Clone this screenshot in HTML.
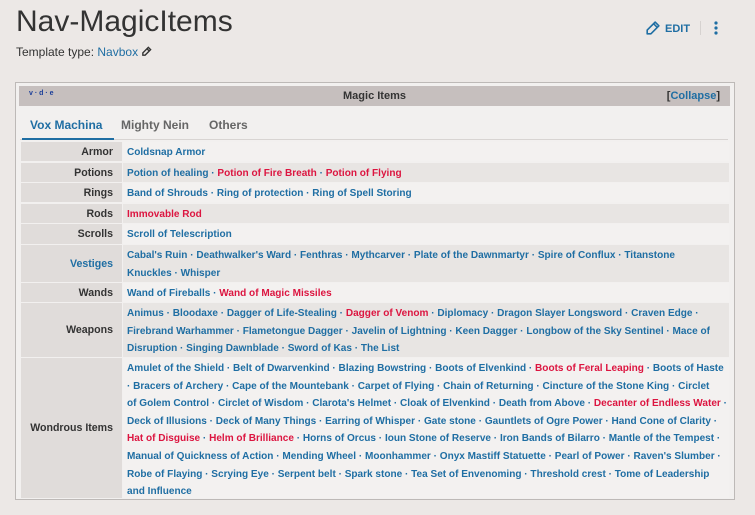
<!DOCTYPE html>
<html><head><meta charset="utf-8"><style>
*{margin:0;padding:0;box-sizing:border-box}
body{width:755px;height:515px;background:#ece8e6;font-family:"Liberation Sans",sans-serif;position:relative;overflow:hidden;color:#333}
h1{position:absolute;left:16px;top:5px;font-size:30px;font-weight:normal;color:#333}
.tt{position:absolute;left:16px;top:45px;font-size:12px;color:#333}
.tt a{color:#1f6ea3}
.edit{position:absolute;left:644px;top:20px;font-size:11px;font-weight:bold;color:#1f6ea3;display:flex;align-items:center;gap:4px}
.sep{position:absolute;left:700px;top:21px;width:1px;height:14px;background:#d6d2d0}
.dots{position:absolute;left:714px;top:21px}
.box{position:absolute;left:15px;top:82px;width:720px;height:418px;border:1px solid #bdb9b7;background:#f2f0ef}
.hd{position:absolute;left:3px;top:3px;width:711px;height:20px;background:#c6bfbe;font-size:11px;font-weight:bold}
.hd .t{position:absolute;left:0;right:0;text-align:center;top:4px;color:#333}
.hd .v{position:absolute;left:10px;top:4px;font-size:7px;color:#1a3d99}
.hd .c{position:absolute;right:10px;top:4px;color:#333}
.hd .c span{color:#1f6ea3}
.tabs{position:absolute;left:4px;top:27px;width:708px;height:30px;border-bottom:1px solid #d8d4d2;font-size:12px;font-weight:bold}
.tab{position:absolute;top:8px;color:#666}
.tab.a{color:#1f6ea3}
.ul{position:absolute;left:2px;top:28px;width:92px;height:2px;background:#1f6ea3}
.row{position:absolute;left:5px;width:708px;font-size:10.05px;font-weight:bold}
.g{position:absolute;left:0;top:0;bottom:0;width:101px;background:#e0dcda;text-align:right;padding-right:9px;display:flex;align-items:center;justify-content:flex-end;color:#333;font-size:10.6px}
.l{position:absolute;left:102px;right:0;top:0;bottom:0;padding:2px 4px;line-height:17.6px;white-space:nowrap;color:#1f6ea3}
.l.o{background:#e8e5e3}.l.e{background:#f3f1f0}
.r{color:#dc1540}
</style></head><body>
<h1>Nav-MagicItems</h1>
<div class="tt">Template type: <a>Navbox</a> <svg width="11" height="11" viewBox="0 0 12 12" style="vertical-align:-1px"><path d="M8 1.5l2.5 2.5L4.5 10H2V7.5z M6.5 3l2.5 2.5" fill="none" stroke="#333" stroke-width="1.5"/></svg></div>
<div class="edit"><svg width="17" height="17" viewBox="0 0 16 16"><path d="M10.5 2l3.5 3.5L6.5 13H3v-3.5z M9 3.5l3.5 3.5" fill="none" stroke="#1f6ea3" stroke-width="1.5" stroke-linejoin="round"/></svg>EDIT</div>
<div class="sep"></div>
<svg class="dots" width="4" height="14" viewBox="0 0 4 14"><circle cx="2" cy="2" r="1.6" fill="#1f6ea3"/><circle cx="2" cy="7" r="1.6" fill="#1f6ea3"/><circle cx="2" cy="12" r="1.6" fill="#1f6ea3"/></svg>
<div class="box">
<div class="hd"><span class="v">v · d · e</span><span class="t">Magic Items</span><span class="c">[<span>Collapse</span>]</span></div>
<div class="tabs"><span class="tab a" style="left:10px">Vox Machina</span><span class="tab" style="left:101px">Mighty Nein</span><span class="tab" style="left:189px">Others</span><div class="ul"></div></div>
<div class="row" style="top:59px;height:19px"><div class="g">Armor</div><div class="l e">Coldsnap Armor</div></div>
<div class="row" style="top:80px;height:19px"><div class="g">Potions</div><div class="l o">Potion of healing · <span class="r">Potion of Fire Breath</span> · <span class="r">Potion of Flying</span></div></div>
<div class="row" style="top:100px;height:19px"><div class="g">Rings</div><div class="l e">Band of Shrouds · Ring of protection · Ring of Spell Storing</div></div>
<div class="row" style="top:121px;height:19px"><div class="g">Rods</div><div class="l o"><span class="r">Immovable Rod</span></div></div>
<div class="row" style="top:141px;height:20px"><div class="g">Scrolls</div><div class="l e">Scroll of Telescription</div></div>
<div class="row" style="top:162px;height:37px"><div class="g" style="color:#1f6ea3">Vestiges</div><div class="l o">Cabal's Ruin · Deathwalker's Ward · Fenthras · Mythcarver · Plate of the Dawnmartyr · Spire of Conflux · Titanstone<br>Knuckles · Whisper</div></div>
<div class="row" style="top:200px;height:19px"><div class="g">Wands</div><div class="l e">Wand of Fireballs · <span class="r">Wand of Magic Missiles</span></div></div>
<div class="row" style="top:220px;height:54px"><div class="g">Weapons</div><div class="l o">Animus · Bloodaxe · Dagger of Life-Stealing · <span class="r">Dagger of Venom</span> · Diplomacy · Dragon Slayer Longsword · Craven Edge ·<br>Firebrand Warhammer · Flametongue Dagger · Javelin of Lightning · Keen Dagger · Longbow of the Sky Sentinel · Mace of<br>Disruption · Singing Dawnblade · Sword of Kas · The List</div></div>
<div class="row" style="top:275px;height:140px"><div class="g">Wondrous Items</div><div class="l e">Amulet of the Shield · Belt of Dwarvenkind · Blazing Bowstring · Boots of Elvenkind · <span class="r">Boots of Feral Leaping</span> · Boots of Haste<br>· Bracers of Archery · Cape of the Mountebank · Carpet of Flying · Chain of Returning · Cincture of the Stone King · Circlet<br>of Golem Control · Circlet of Wisdom · Clarota's Helmet · Cloak of Elvenkind · Death from Above · <span class="r">Decanter of Endless Water</span> ·<br>Deck of Illusions · Deck of Many Things · Earring of Whisper · Gate stone · Gauntlets of Ogre Power · Hand Cone of Clarity ·<br><span class="r">Hat of Disguise</span> · <span class="r">Helm of Brilliance</span> · Horns of Orcus · Ioun Stone of Reserve · Iron Bands of Bilarro · Mantle of the Tempest ·<br>Manual of Quickness of Action · Mending Wheel · Moonhammer · Onyx Mastiff Statuette · Pearl of Power · Raven's Slumber ·<br>Robe of Flaying · Scrying Eye · Serpent belt · Spark stone · Tea Set of Envenoming · Threshold crest · Tome of Leadership<br>and Influence</div></div>
</div>
</body></html>
